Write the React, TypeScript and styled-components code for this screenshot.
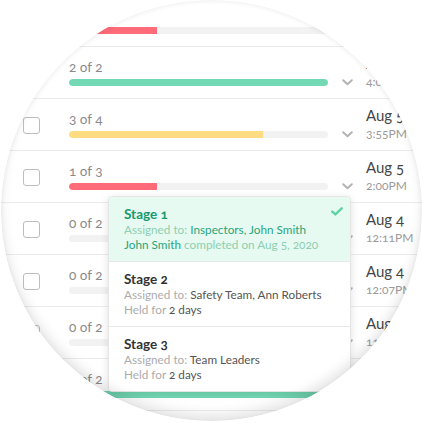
import React from "react";
import styled, { createGlobalStyle } from "styled-components";

const Global = createGlobalStyle`
  html, body { margin: 0; padding: 0; background: #fff; }
  body { font-family: Lato, "Open Sans", sans-serif; font-variant-numeric: oldstyle-nums; }
  * { box-sizing: border-box; }
`;

const Frame = styled.div`
  width: 423px;
  height: 423px;
  padding: 0 0 0 1px;
  background: #fff;
  overflow: hidden;
`;

const Lens = styled.div`
  position: relative;
  width: 421px;
  height: 421px;
  border-radius: 50%;
  overflow: hidden;
  background: #fff;
`;

const Shade = styled.div`
  position: absolute;
  inset: 0;
  border-radius: 50%;
  pointer-events: none;
  z-index: 5;
  box-shadow: inset 0 -7px 12px rgba(0, 0, 0, 0.1), inset 0 1px 5px rgba(0, 0, 0, 0.06);
`;

const Table = styled.div`
  margin-top: -5px;
  display: flex;
  flex-direction: column;
`;

const Row = styled.div`
  position: relative;
  height: 52px;
  border-bottom: 1px solid #ececec;
  display: grid;
  grid-template-columns: 46px 259px 38px 1fr;
  padding-left: 22px;
`;

const CheckCell = styled.div`
  display: flex;
  align-items: center;
`;

const Checkbox = styled.div`
  width: 17px;
  height: 17px;
  border: 1.5px solid #bdbdbd;
  border-radius: 3px;
  background: #fff;
  margin-top: 1px;
`;

const Progress = styled.div`
  padding-top: 12px;
  display: flex;
  flex-direction: column;
  gap: 4px;
`;

const Count = styled.div`
  font-size: 13.5px;
  line-height: 16px;
  color: #8a8a8a;
`;

const Track = styled.div`
  height: 7px;
  border-radius: 4px;
  background: #f2f2f2;
  overflow: hidden;
`;

const Fill = styled.div<{ $color: string; $full: boolean }>`
  height: 100%;
  border-radius: ${(p) => (p.$full ? "4px" : "4px 0 0 4px")};
  background: ${(p) => p.$color};
`;

const ChevronCell = styled.div`
  display: flex;
  justify-content: center;
  padding-top: 32px;
  color: #b3b3b3;
`;

const DateCell = styled.div`
  padding-top: 7px;
  display: flex;
  flex-direction: column;
  white-space: nowrap;
`;

const DateText = styled.div`
  font-size: 15px;
  line-height: 18px;
  color: #454545;
`;

const TimeText = styled.div`
  margin-top: 3px;
  font-size: 12px;
  line-height: 14px;
  color: #9a9a9a;
`;

const Dropdown = styled.div`
  position: absolute;
  top: 45px;
  left: 107px;
  width: 243px;
  z-index: 3;
  background: #fff;
  border: 1px solid #e6e6e6;
  border-radius: 4px;
  box-shadow: 0 2px 8px rgba(0, 0, 0, 0.12);
  overflow: hidden;
`;

const Stage = styled.div<{ $done?: boolean }>`
  position: relative;
  height: 65px;
  padding: 9px 15px 0;
  background: ${(p) => (p.$done ? "#e7faf1" : "#fff")};
  border-bottom: 1px solid #e8e8e8;
  &:last-child { border-bottom: none; height: 64px; }
`;

const StageTitle = styled.div<{ $done?: boolean }>`
  font-size: 13.5px;
  line-height: 16px;
  font-weight: 700;
  color: ${(p) => (p.$done ? "#17996f" : "#333")};
`;

const Line = styled.div`
  font-size: 11.75px;
  line-height: 15px;
  white-space: nowrap;
`;

const Muted = styled.span<{ $done?: boolean }>`
  color: ${(p) => (p.$done ? "#8ccfb2" : "#acacac")};
`;

const Value = styled.span<{ $done?: boolean }>`
  color: ${(p) => (p.$done ? "#27a57b" : "#555")};
`;

const Tick = styled.div`
  position: absolute;
  top: 10px;
  right: 7px;
  display: flex;
`;

type RowData = { count: string; pct: number; color: string; date: string; time: string };

const rows: RowData[] = [
  { count: "1 of 3", pct: 34, color: "#ff6b78", date: "Aug 5", time: "4:12PM" },
  { count: "2 of 2", pct: 100, color: "#72d9b4", date: "Aug 5", time: "4:05PM" },
  { count: "3 of 4", pct: 75, color: "#ffdc82", date: "Aug 5", time: "3:55PM" },
  { count: "1 of 3", pct: 34, color: "#ff6b78", date: "Aug 5", time: "2:00PM" },
  { count: "0 of 2", pct: 0, color: "#72d9b4", date: "Aug 4", time: "12:11PM" },
  { count: "0 of 2", pct: 0, color: "#72d9b4", date: "Aug 4", time: "12:07PM" },
  { count: "0 of 2", pct: 0, color: "#72d9b4", date: "Aug 4", time: "11:58AM" },
  { count: "2 of 2", pct: 100, color: "#72d9b4", date: "Aug 4", time: "11:40AM" },
];

const Chevron = () => (
  <svg width="11" height="7" viewBox="0 0 11 7" fill="none">
    <path d="M1.2 1.2 L5.5 5.3 L9.8 1.2" stroke="currentColor" strokeWidth="2" strokeLinecap="round" strokeLinejoin="round" />
  </svg>
);

const Check = () => (
  <svg width="12" height="9" viewBox="0 0 12 9" fill="none">
    <path d="M1.3 4.6 L4.4 7.4 L10.7 1.3" stroke="#5fd3a5" strokeWidth="2.4" strokeLinecap="round" strokeLinejoin="round" />
  </svg>
);

const StagesMenu = () => (
  <Dropdown>
    <Stage $done>
      <StageTitle $done>Stage 1</StageTitle>
      <Line>
        <Muted $done>Assigned to: </Muted>
        <Value $done>Inspectors, John Smith</Value>
      </Line>
      <Line>
        <Value $done>John Smith</Value>
        <Muted $done> completed on Aug 5, 2020</Muted>
      </Line>
      <Tick>
        <Check />
      </Tick>
    </Stage>
    <Stage>
      <StageTitle>Stage 2</StageTitle>
      <Line>
        <Muted>Assigned to: </Muted>
        <Value>Safety Team, Ann Roberts</Value>
      </Line>
      <Line>
        <Muted>Held for </Muted>
        <Value>2 days</Value>
      </Line>
    </Stage>
    <Stage>
      <StageTitle>Stage 3</StageTitle>
      <Line>
        <Muted>Assigned to: </Muted>
        <Value>Team Leaders</Value>
      </Line>
      <Line>
        <Muted>Held for </Muted>
        <Value>2 days</Value>
      </Line>
    </Stage>
  </Dropdown>
);

export default function App() {
  return (
    <>
      <Global />
      <Frame>
        <Lens>
          <Table>
            {rows.map((r, i) => (
              <Row key={i}>
                <CheckCell>
                  <Checkbox />
                </CheckCell>
                <Progress>
                  <Count>{r.count}</Count>
                  <Track>
                    <Fill $color={r.color} $full={r.pct === 100} style={{ width: `${r.pct}%` }} />
                  </Track>
                </Progress>
                <ChevronCell>
                  <Chevron />
                </ChevronCell>
                <DateCell>
                  <DateText>{r.date}</DateText>
                  <TimeText>{r.time}</TimeText>
                </DateCell>
                {i === 3 && <StagesMenu />}
              </Row>
            ))}
          </Table>
          <Shade />
        </Lens>
      </Frame>
    </>
  );
}
